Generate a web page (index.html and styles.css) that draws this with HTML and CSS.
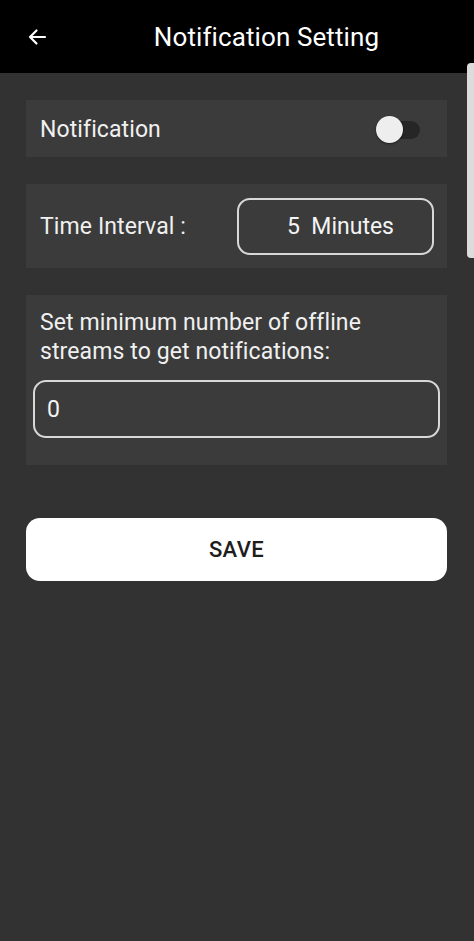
FILE: index.html
```html
<!DOCTYPE html>
<html>
<head>
<meta charset="utf-8">
<link rel="stylesheet" href="styles.css">
</head>
<body>
<header class="appbar">
  <span class="back">
    <svg width="24" height="24" viewBox="0 0 24 24"><path d="M20 12H5M11.5 5.5L5 12l6.5 6.5" fill="none" stroke="#fff" stroke-width="2.2" stroke-linecap="round" stroke-linejoin="round"/></svg>
  </span>
  <h1 class="title">Notification Setting</h1>
</header>
<main class="content">
  <section class="card card-toggle">
    <span class="label">Notification</span>
    <span class="switch"><span class="track"></span><span class="thumb"></span></span>
  </section>
  <section class="card card-interval">
    <span class="label">Time Interval :</span>
    <div class="interval-box">5&nbsp; Minutes</div>
  </section>
  <section class="card card-min">
    <p class="label multi">Set minimum number of offline<br>streams to get notifications:</p>
    <div class="input-box">0</div>
  </section>
  <button class="save">SAVE</button>
</main>
<div class="scrollbar"></div>
</body>
</html>
```
FILE: styles.css
```css
html, body {
  margin: 0;
  padding: 0;
  background: #323232;
  height: 100%;
}
body {
  font-family: Roboto, "Noto Sans", sans-serif;
  color: #f2f2f2;
  position: relative;
  overflow: hidden;
}
.appbar {
  height: 73px;
  background: #000;
  display: flex;
  align-items: center;
  position: relative;
}
.back {
  position: absolute;
  left: 25px;
  top: 25px;
  width: 24px;
  height: 24px;
}
.back svg { display: block; }
.title {
  margin: 0;
  width: 100%;
  text-align: center;
  padding-left: 59px;
  box-sizing: border-box;
  font-weight: 400;
  font-size: 26px;
  color: #fff;
  letter-spacing: 0.1px;
}
.content {
  padding: 27px 27px 0 26px;
  display: flex;
  flex-direction: column;
  gap: 27px;
}
.card {
  background: #3b3b3b;
  box-sizing: border-box;
}
.label {
  font-size: 23px;
  color: #f0f0f0;
  letter-spacing: 0.1px;
}
.card-toggle {
  height: 57px;
  display: flex;
  align-items: center;
  justify-content: space-between;
  padding: 2px 27px 0 14px;
}
.switch {
  position: relative;
  width: 44px;
  height: 28px;
}
.track {
  position: absolute;
  left: 6px;
  right: 0;
  top: 5px;
  height: 18px;
  border-radius: 9px;
  background: #262626;
}
.thumb {
  position: absolute;
  left: 0;
  top: 0;
  width: 27px;
  height: 27px;
  border-radius: 50%;
  background: #eeeeee;
  box-shadow: 0 1px 2px rgba(0,0,0,0.5);
}
.card-interval {
  height: 84px;
  display: flex;
  align-items: center;
  justify-content: space-between;
  padding: 0 13px 0 14px;
}
.interval-box {
  width: 197px;
  height: 57px;
  box-sizing: border-box;
  border: 2px solid #d8d8d8;
  border-radius: 13px;
  display: flex;
  align-items: center;
  justify-content: center;
  padding-left: 10px;
  font-size: 23px;
  color: #f4f4f4;
}
.card-min {
  padding: 13px 7px 27px 7px;
}
.multi {
  margin: 0 0 14px 7px;
  line-height: 29px;
}
.input-box {
  height: 58px;
  box-sizing: border-box;
  border: 2px solid #d8d8d8;
  border-radius: 13px;
  display: flex;
  align-items: center;
  padding-left: 12px;
  font-size: 23px;
  color: #f4f4f4;
}
.save {
  margin-top: 26px;
  height: 63px;
  border: none;
  border-radius: 14px;
  background: #fff;
  color: #1e1e1e;
  font-family: Roboto, "Noto Sans", sans-serif;
  font-size: 22px;
  font-weight: 500;
  letter-spacing: 0.4px;
}
.scrollbar {
  position: absolute;
  right: 0;
  top: 63px;
  width: 7px;
  height: 195px;
  background: #dcdcdc;
  border-radius: 4px 0 0 4px;
}
```
